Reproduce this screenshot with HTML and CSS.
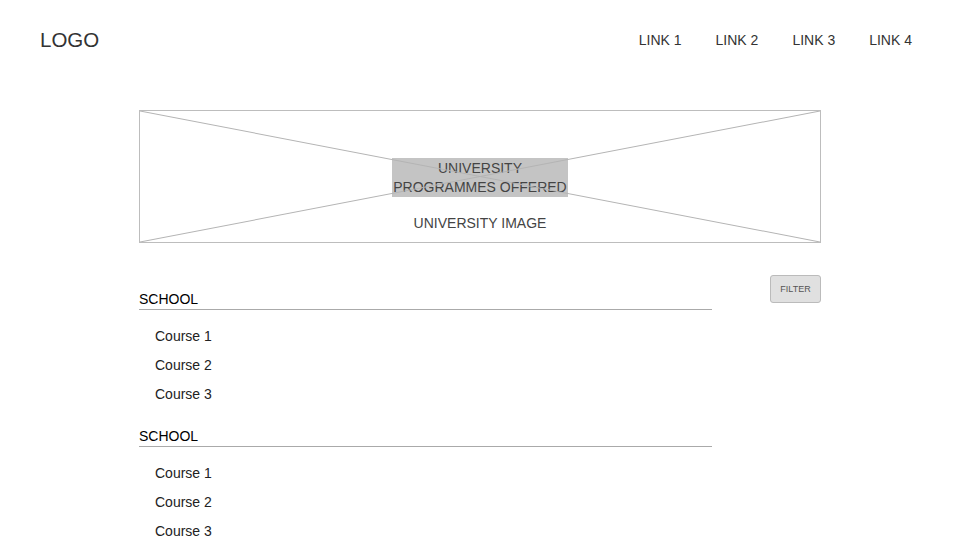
FILE: index.html
```html
<!DOCTYPE html>
<html lang="en">
<head>
<meta charset="utf-8">
<title>University Programmes</title>
<link rel="stylesheet" href="styles.css">
</head>
<body>
<header class="site-header">
  <div class="logo">LOGO</div>
  <nav class="nav">
    <a class="nav-link" href="#">LINK 1</a>
    <a class="nav-link" href="#">LINK 2</a>
    <a class="nav-link" href="#">LINK 3</a>
    <a class="nav-link" href="#">LINK 4</a>
  </nav>
</header>
<main class="main">
  <section class="hero">
    <div class="hero-label">UNIVERSITY<br>PROGRAMMES OFFERED</div>
    <div class="hero-caption">UNIVERSITY IMAGE</div>
    <svg class="hero-cross" viewBox="0 0 100 100" preserveAspectRatio="none" aria-hidden="true">
      <line x1="0" y1="0" x2="100" y2="100" vector-effect="non-scaling-stroke"/>
      <line x1="100" y1="0" x2="0" y2="100" vector-effect="non-scaling-stroke"/>
    </svg>
  </section>
  <section class="listing">
    <div class="schools">
      <div class="school">
        <h2 class="school-title">SCHOOL</h2>
        <ul class="courses">
          <li>Course 1</li>
          <li>Course 2</li>
          <li>Course 3</li>
        </ul>
      </div>
      <div class="school">
        <h2 class="school-title">SCHOOL</h2>
        <ul class="courses">
          <li>Course 1</li>
          <li>Course 2</li>
          <li>Course 3</li>
        </ul>
      </div>
    </div>
    <button class="filter-btn" type="button">FILTER</button>
  </section>
</main>
</body>
</html>
```
FILE: styles.css
```css
* { box-sizing: border-box; }
html, body { margin: 0; padding: 0; background: #fff; }
body {
  font-family: "Liberation Sans", Arial, Helvetica, sans-serif;
  color: #333;
  overflow: hidden;
}
.site-header {
  display: flex;
  justify-content: space-between;
  align-items: flex-start;
  padding: 28px 48px 0 40px;
}
.logo {
  font-size: 20.5px;
  line-height: 24px;
  color: #333;
}
.nav {
  display: flex;
  gap: 34px;
  margin-top: 4px;
}
.nav-link {
  font-size: 14px;
  line-height: 16px;
  color: #333;
  text-decoration: none;
}
.main {
  width: 682px;
  margin: 58px auto 0;
}
.hero {
  position: relative;
  height: 133px;
  border: 1px solid #bdbdbd;
  display: flex;
  flex-direction: column;
  align-items: center;
  padding-top: 47px;
}
.hero-label {
  background: #c4c4c4;
  color: #444;
  font-size: 14px;
  line-height: 18.5px;
  padding: 1px 1px 0;
  height: 39px;
  text-align: center;
}
.hero-caption {
  margin-top: 18px;
  font-size: 14px;
  line-height: 16px;
  color: #444;
}
.hero-cross {
  position: absolute;
  inset: 0;
  width: 100%;
  height: 100%;
  pointer-events: none;
}
.hero-cross line {
  stroke: #b4b4b4;
  stroke-width: 1;
}
.listing {
  display: flex;
  justify-content: space-between;
  align-items: flex-start;
  margin-top: 32px;
}
.schools {
  width: 573px;
  padding-top: 16px;
}
.school + .school { margin-top: 19px; }
.school-title {
  margin: 0;
  font-size: 14px;
  line-height: 16px;
  font-weight: normal;
  color: #000;
  padding-bottom: 2px;
  border-bottom: 1px solid #aaa;
}
.courses {
  list-style: none;
  margin: 0;
  padding: 12px 0 0 16px;
}
.courses li {
  font-size: 14px;
  line-height: 29px;
  color: #222;
}
.filter-btn {
  width: 51px;
  height: 28px;
  background: #e0e0e0;
  border: 1px solid #bbb;
  border-radius: 3px;
  font-family: "Liberation Sans", Arial, sans-serif;
  font-size: 9px;
  color: #555;
  padding: 0;
}
```
